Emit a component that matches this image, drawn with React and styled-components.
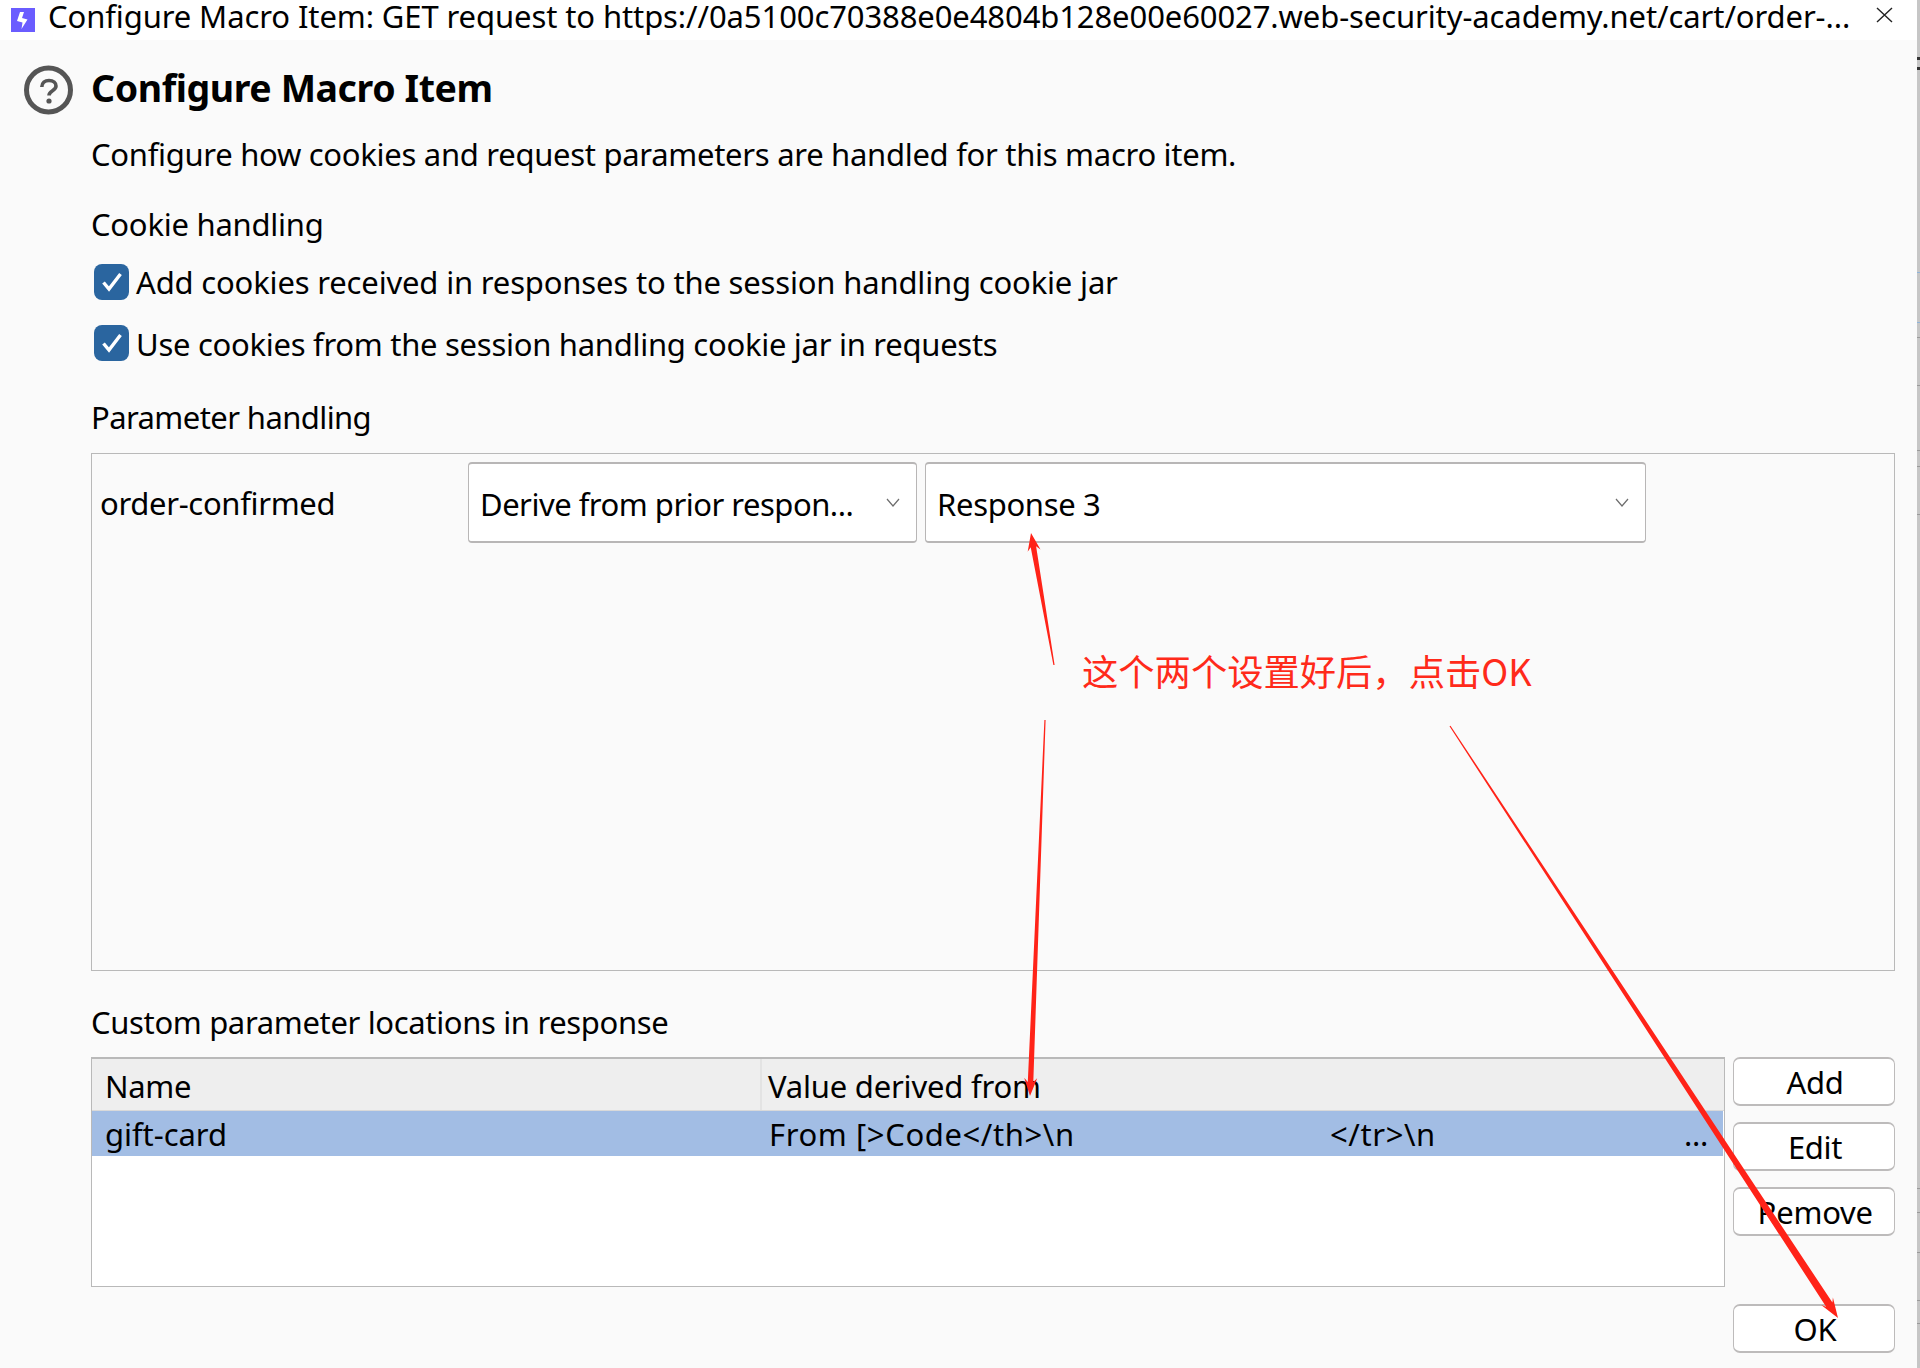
import React from "react";
import styled, { createGlobalStyle } from "styled-components";

const GlobalStyle = createGlobalStyle`
  html, body {
    margin: 0;
    padding: 0;
    background: #fafafa;
  }
  body {
    font-family: "Noto Sans", "Open Sans", sans-serif;
    color: #000;
    overflow: hidden;
  }
`;

const Page = styled.div`
  position: relative;
  width: 1920px;
  height: 1368px;
  overflow: hidden;
  background: #fafafa;
  font-size: 31px;
  letter-spacing: -0.32px;
`;

const TitleBar = styled.div`
  height: 40px;
  background: #fff;
  display: flex;
  align-items: center;
  padding-left: 11px;
  padding-right: 27px;
`;

const TitleIcon = styled.svg`
  flex: none;
  margin-bottom: 1px;
`;

const TitleText = styled.div`
  flex: 1;
  margin-left: 13px;
  margin-bottom: 8px;
  white-space: nowrap;
  line-height: 32px;
  letter-spacing: -0.1px;
`;

const CloseButton = styled.svg`
  width: 17px;
  height: 16px;
  margin-bottom: 10px;
`;

const Content = styled.div`
  display: flex;
  flex-direction: column;
  padding: 25px 25px 0 91px;
`;

const HeadingRow = styled.div`
  display: flex;
  align-items: center;
  gap: 18px;
  margin-left: -67px;
  height: 49px;
`;

const Heading = styled.h1`
  margin: 0 0 4px;
  font-size: 37.5px;
  font-weight: 700;
  letter-spacing: -0.42px;
`;

const Line = styled.div`
  height: 40px;
  line-height: 38px;
  margin-top: ${(p) => p.$top}px;
  letter-spacing: ${(p) => p.$track}px;
  white-space: nowrap;
`;

const CheckRow = styled.label`
  display: flex;
  align-items: center;
  gap: 7px;
  height: 36px;
  margin-top: ${(p) => p.$top}px;
  margin-left: 3px;
  letter-spacing: ${(p) => p.$track}px;
  white-space: nowrap;
`;

const CheckText = styled.span`
  padding-top: ${(p) => p.$nudge || 0}px;
`;

const CheckBox = styled.span`
  width: 35px;
  height: 36px;
  border-radius: 8px;
  background: #2a659f;
  display: flex;
  align-items: center;
  justify-content: center;
`;

const ParamPanel = styled.div`
  box-sizing: border-box;
  height: 518px;
  margin-top: 15px;
  border: 1px solid #b9b9b9;
  padding: 8px;
  display: flex;
  align-items: flex-start;
`;

const ParamName = styled.div`
  width: 368px;
  height: 81px;
  line-height: 82px;
`;

const Select = styled.div`
  box-sizing: border-box;
  width: ${(p) => p.$width}px;
  height: 81px;
  margin-right: 8px;
  padding: 0 16px 0 11px;
  background: #fff;
  border: 1px solid #b8b6b6;
  border-top-width: 2px;
  border-bottom-width: 2px;
  border-radius: 4px;
  display: flex;
  align-items: center;
  justify-content: space-between;
  white-space: nowrap;
`;

const SelectText = styled.span`
  padding-top: 3px;
  letter-spacing: ${(p) => p.$track}px;
`;

const TableSection = styled.div`
  display: flex;
  gap: 8px;
  margin-top: 14px;
  height: 296px;
`;

const Table = styled.div`
  box-sizing: border-box;
  width: 1634px;
  height: 230px;
  background: #fff;
  border: 1px solid #b9b9b9;
  border-top-width: 2px;
`;

const TableHead = styled.div`
  display: flex;
  height: 52px;
  background: #eee;
  border-bottom: 1px solid #d9d9d9;
  box-sizing: border-box;
`;

const HeadCell = styled.div`
  box-sizing: border-box;
  width: ${(p) => (p.$first ? "670px" : "auto")};
  flex: ${(p) => (p.$first ? "none" : 1)};
  padding-left: ${(p) => (p.$first ? "13px" : "6px")};
  line-height: 54px;
  letter-spacing: ${(p) => (p.$first ? "-0.32px" : "-0.2px")};
  border-right: ${(p) => (p.$first ? "2px solid #e3e3e3" : "none")};
`;

const SelectedRow = styled.div`
  display: flex;
  height: 45px;
  margin-right: 1px;
  background: #a2bde4;
  line-height: 47px;
  white-space: nowrap;
`;

const NameCell = styled.div`
  width: 670px;
  padding-left: 13px;
  box-sizing: border-box;
  letter-spacing: -0.05px;
`;

const ValueCell = styled.div`
  flex: 1;
  display: flex;
  padding-left: 7px;
  padding-right: 15px;
`;

const ValueStart = styled.span`
  width: 561px;
  letter-spacing: 0.6px;
`;

const ValueEnd = styled.span`
  flex: 1;
  letter-spacing: 0.6px;
`;

const ButtonColumn = styled.div`
  display: flex;
  flex-direction: column;
  gap: 16px;
  width: 162px;
`;

const Button = styled.button`
  box-sizing: border-box;
  height: 49px;
  margin-top: ${(p) => (p.$push ? "auto" : "0")};
  padding: 0 0 0 2px;
  background: #fff;
  border: 1px solid #bdbbbb;
  border-top-width: 2px;
  border-bottom-width: 2px;
  border-radius: 7px;
  color: #000;
  font: inherit;
  letter-spacing: inherit;
  line-height: 44px;
`;

const EdgeStrip = styled.div`
  position: absolute;
  right: 0;
  top: 0;
  width: 3px;
  height: 1368px;
  background: #c6c6c6;
`;

const EdgeTick = styled.div`
  position: absolute;
  left: 0;
  right: 0;
  top: ${(p) => p.$y}px;
  height: ${(p) => p.$h || 1}px;
  background: ${(p) => p.$color || "#9a9a9a"};
`;

const Overlay = styled.svg`
  position: absolute;
  left: 0;
  top: 0;
  pointer-events: none;
`;

const Annotation = styled.div`
  position: absolute;
  left: 1082px;
  top: 644px;
  color: #ff2a1a;
  font-family: "Noto Sans CJK SC", "Noto Sans", sans-serif;
  font-size: 36.3px;
  font-weight: 400;
  line-height: 52px;
  letter-spacing: 0;
  white-space: nowrap;
`;

// tapered annotation arrow, thin at the tail and thick near the head
const arrowPoints = (x1, y1, x2, y2, tail, body, head, len) => {
  const d = Math.hypot(x2 - x1, y2 - y1);
  const ux = (x2 - x1) / d;
  const uy = (y2 - y1) / d;
  const nx = -uy;
  const ny = ux;
  const at = (along, side) =>
    `${(x1 + ux * along + nx * side).toFixed(1)},${(y1 + uy * along + ny * side).toFixed(1)}`;
  const neck = d - len;
  return [
    at(0, -tail / 2),
    at(neck + 4, -body / 2),
    at(neck, -head / 2),
    at(d, 0),
    at(neck, head / 2),
    at(neck + 4, body / 2),
    at(0, tail / 2),
  ].join(" ");
};

const arrows = [
  [1054, 665, 1031, 533, 1.2, 5.5, 13, 18],
  [1045, 720, 1030, 1096, 1.2, 5.5, 13, 18],
  [1450, 726, 1838, 1318, 1.2, 7.5, 14, 20],
];

const edgeTicks = [
  { y: 57, h: 3, color: "#333" },
  { y: 67, h: 3, color: "#333" },
  { y: 272, color: "#8fb4d8" },
  { y: 322, color: "#8fb4d8" },
  { y: 337 },
  { y: 385 },
  { y: 450 },
  { y: 466 },
  { y: 514 },
  { y: 1188 },
  { y: 1212 },
  { y: 1252 },
  { y: 1300 },
  { y: 1323 },
];

const Check = () => (
  <svg width="24" height="22" viewBox="0 0 24 22">
    <path d="M3.5 11.5 L9 18 L20.5 3" fill="none" stroke="#fff" strokeWidth="3.4" />
  </svg>
);

const Chevron = () => (
  <svg width="14" height="9" viewBox="0 0 14 9">
    <path d="M1 1 L7 8 L13 1" fill="none" stroke="#6d6d6d" strokeWidth="1.2" />
  </svg>
);

export default function App() {
  return (
    <Page>
      <GlobalStyle />
      <TitleBar>
        <TitleIcon width="24" height="24" viewBox="0 0 24 24">
          <rect width="24" height="24" fill="#6a5cff" />
          <path d="M9 4 L13 4 L11 10 L16.5 11.5 L10.5 21 L11.5 14.5 L6 13 Z" fill="#fff" />
        </TitleIcon>
        <TitleText>
          Configure Macro Item: GET request to https://0a5100c70388e0e4804b128e00e60027.web-security-academy.net/cart/order-...
        </TitleText>
        <CloseButton viewBox="0 0 17 16">
          <path d="M1 1 L16 15 M16 1 L1 15" stroke="#222" strokeWidth="1.4" fill="none" />
        </CloseButton>
      </TitleBar>

      <Content>
        <HeadingRow>
          <svg width="49" height="50" viewBox="0 0 49 50">
            <circle cx="24.5" cy="25" r="22" fill="none" stroke="#555" strokeWidth="5" />
            <path
              d="M17.8 22 C17.8 17.5 21 15.5 25 15.5 C29.5 15.5 32 18 32 21 C32 26 25 25.5 25 30.5"
              fill="none"
              stroke="#555"
              strokeWidth="3.6"
            />
            <circle cx="25" cy="36" r="2.6" fill="#555" />
          </svg>
          <Heading>Configure Macro Item</Heading>
        </HeadingRow>
        <Line $top={21} $track={-0.29}>
          Configure how cookies and request parameters are handled for this macro item.
        </Line>
        <Line $top={30} $track={-0.24}>
          Cookie handling
        </Line>
        <CheckRow $top={19} $track={-0.17}>
          <CheckBox>
            <Check />
          </CheckBox>
          <CheckText>Add cookies received in responses to the session handling cookie jar</CheckText>
        </CheckRow>
        <CheckRow $top={25} $track={-0.28}>
          <CheckBox>
            <Check />
          </CheckBox>
          <CheckText $nudge={2}>Use cookies from the session handling cookie jar in requests</CheckText>
        </CheckRow>
        <Line $top={37} $track={-0.59}>
          Parameter handling
        </Line>

        <ParamPanel>
          <ParamName>order-confirmed</ParamName>
          <Select $width={449}>
            <SelectText $track={-0.5}>Derive from prior respon...</SelectText>
            <Chevron />
          </Select>
          <Select $width={721}>
            <SelectText $track={-0.32}>Response 3</SelectText>
            <Chevron />
          </Select>
        </ParamPanel>

        <Line $top={32} $track={-0.35}>
          Custom parameter locations in response
        </Line>

        <TableSection>
          <Table>
            <TableHead>
              <HeadCell $first>Name</HeadCell>
              <HeadCell>Value derived from</HeadCell>
            </TableHead>
            <SelectedRow>
              <NameCell>gift-card</NameCell>
              <ValueCell>
                <ValueStart>{"From [>Code</th>\\n"}</ValueStart>
                <ValueEnd>{"</tr>\\n"}</ValueEnd>
                <span>...</span>
              </ValueCell>
            </SelectedRow>
          </Table>
          <ButtonColumn>
            <Button>Add</Button>
            <Button>Edit</Button>
            <Button>Remove</Button>
            <Button $push>OK</Button>
          </ButtonColumn>
        </TableSection>
      </Content>

      <EdgeStrip>
        {edgeTicks.map((t) => (
          <EdgeTick key={t.y} $y={t.y} $h={t.h} $color={t.color} />
        ))}
      </EdgeStrip>

      <Annotation>这个两个设置好后，点击OK</Annotation>
      <Overlay width="1920" height="1368" viewBox="0 0 1920 1368">
        {arrows.map((a, i) => (
          <polygon key={i} points={arrowPoints(...a)} fill="#ff2318" />
        ))}
      </Overlay>
    </Page>
  );
}
